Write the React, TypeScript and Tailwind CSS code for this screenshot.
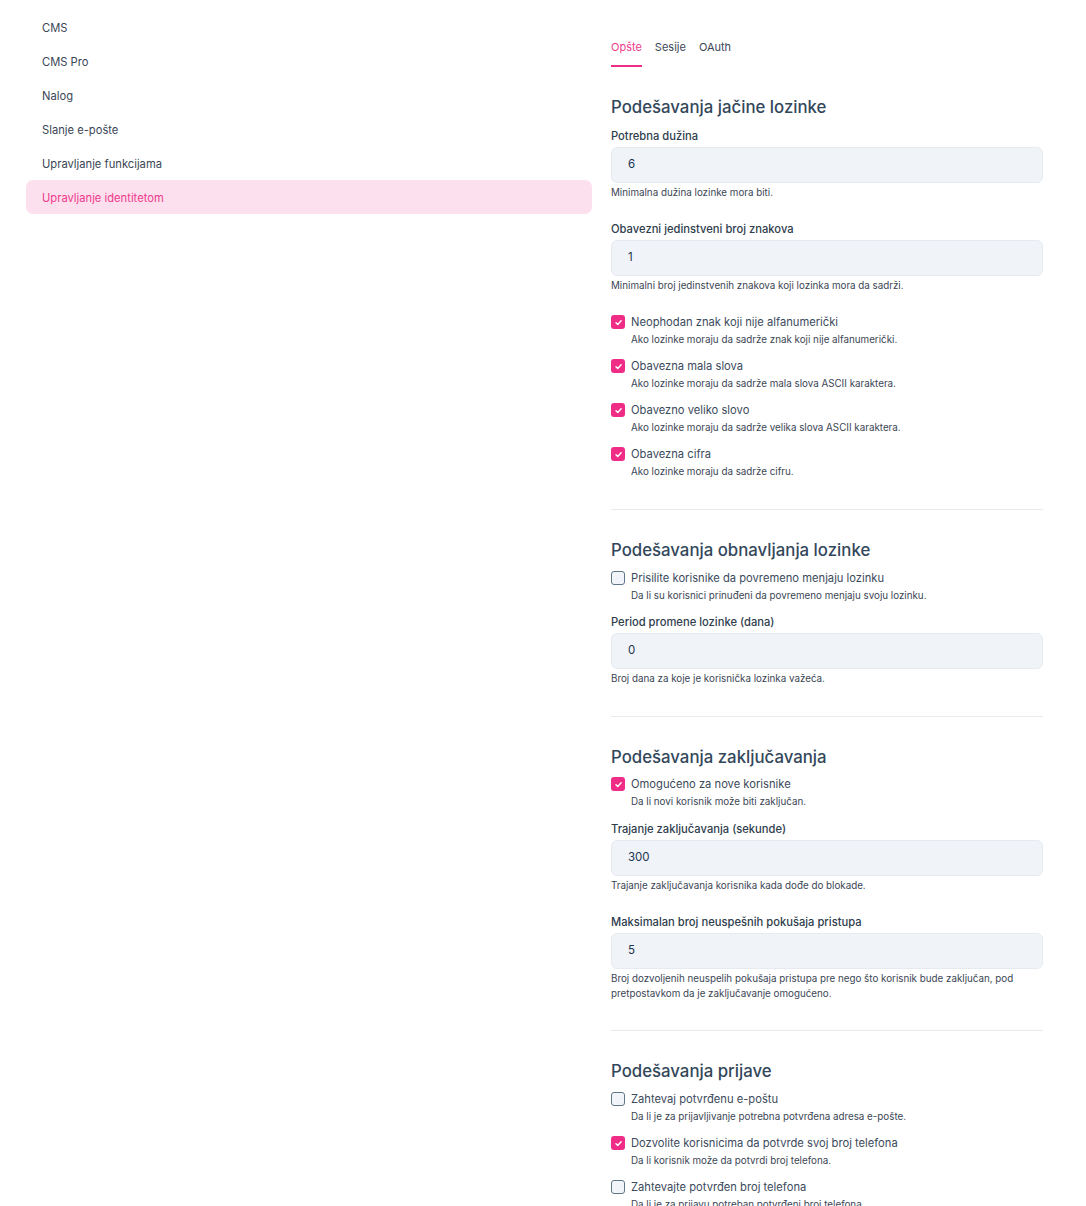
import React from "react";

const navItems = [
  "CMS",
  "CMS Pro",
  "Nalog",
  "Slanje e-pošte",
  "Upravljanje funkcijama",
  "Upravljanje identitetom",
];

function Check({ checked }: { checked: boolean }) {
  if (checked) {
    return (
      <span className="flex h-[14px] w-[14px] shrink-0 items-center justify-center rounded-[3px] bg-[#ef2d87]">
        <svg width="9" height="9" viewBox="0 0 10 10" fill="none">
          <path d="M2.2 5.2 L4.2 7.1 L7.9 3.1" stroke="white" strokeWidth="1.6" strokeLinecap="round" strokeLinejoin="round" />
        </svg>
      </span>
    );
  }
  return <span className="h-[14px] w-[14px] shrink-0 rounded-[3px] border border-[#5f7686] bg-[#f1f5f9]" />;
}

function CheckItem({ checked, label, desc, className = "" }: { checked: boolean; label: string; desc: string; className?: string }) {
  return (
    <div className={className}>
      <div className="flex items-center gap-[6px]">
        <Check checked={checked} />
        <span className="text-[11.2px] leading-[16px] text-[#3b4a5c]">{label}</span>
      </div>
      <div className="mt-[3px] pl-[20px] text-[9.8px] leading-[14px] text-[#3b4654]">{desc}</div>
    </div>
  );
}

function Field({ label, value, help, className = "" }: { label: string; value: string; help: React.ReactNode; className?: string }) {
  return (
    <div className={className}>
      <div className="text-[11.2px] font-medium leading-[16px] text-[#2f3d4d]">{label}</div>
      <div className="mt-[3px] flex h-[36px] items-center rounded-[6px] border border-[#e6ebf1] bg-[#f0f3f7] pl-[16px] text-[11.5px] text-[#1d3550]">
        {value}
      </div>
      <div className="mt-[2px] text-[9.8px] leading-[15px] text-[#3b4654]">{help}</div>
    </div>
  );
}

function Heading({ children }: { children: React.ReactNode }) {
  return <h2 className="text-[16.8px] font-medium leading-[24px] text-[#33475a]">{children}</h2>;
}

export default function App() {
  return (
    <div className="flex bg-white pl-[26px]" style={{ fontFamily: "Inter, 'Noto Sans', sans-serif" }}>
      <nav className="mt-[10px] flex w-[566px] shrink-0 flex-col">
        {navItems.map((item, i) => {
          const active = i === navItems.length - 1;
          return (
            <div
              key={item}
              className={
                active
                  ? "flex h-[34px] items-center rounded-[7px] bg-[#fde0ee] px-[16px] pt-[2px] text-[11.2px] text-[#ee3a8c]"
                  : "flex h-[34px] items-center px-[16px] pt-[2px] text-[11.2px] text-[#3a4656]"
              }
            >
              {item}
            </div>
          );
        })}
      </nav>

      <main className="ml-[19px] w-[432px] shrink-0 pb-[10px]">
        <div className="mt-[39px] flex gap-[13px]">
          <div className="border-b-2 border-[#ef2d87] pb-[10px] text-[11px] leading-[16px] text-[#ee3a8c]">Opšte</div>
          <div className="pb-[10px] text-[11px] leading-[16px] text-[#3a4656]">Sesije</div>
          <div className="pb-[10px] text-[11px] leading-[16px] text-[#3a4656]">OAuth</div>
        </div>

        <section className="mt-[28px] pb-[30px]">
          <Heading>Podešavanja jačine lozinke</Heading>
          <Field className="mt-[9px]" label="Potrebna dužina" value="6" help="Minimalna dužina lozinke mora biti." />
          <Field
            className="mt-[21px]"
            label="Obavezni jedinstveni broj znakova"
            value="1"
            help="Minimalni broj jedinstvenih znakova koji lozinka mora da sadrži."
          />
          <CheckItem
            className="mt-[21px]"
            checked
            label="Neophodan znak koji nije alfanumerički"
            desc="Ako lozinke moraju da sadrže znak koji nije alfanumerički."
          />
          <CheckItem
            className="mt-[11px]"
            checked
            label="Obavezna mala slova"
            desc="Ako lozinke moraju da sadrže mala slova ASCII karaktera."
          />
          <CheckItem
            className="mt-[11px]"
            checked
            label="Obavezno veliko slovo"
            desc="Ako lozinke moraju da sadrže velika slova ASCII karaktera."
          />
          <CheckItem className="mt-[11px]" checked label="Obavezna cifra" desc="Ako lozinke moraju da sadrže cifru." />
        </section>

        <section className="border-t border-[#e8ebef] pt-[28px] pb-[30px]">
          <Heading>Podešavanja obnavljanja lozinke</Heading>
          <CheckItem
            className="mt-[8px]"
            checked={false}
            label="Prisilite korisnike da povremeno menjaju lozinku"
            desc="Da li su korisnici prinuđeni da povremeno menjaju svoju lozinku."
          />
          <Field
            className="mt-[11px]"
            label="Period promene lozinke (dana)"
            value="0"
            help="Broj dana za koje je korisnička lozinka važeća."
          />
        </section>

        <section className="border-t border-[#e8ebef] pt-[28px] pb-[29px]">
          <Heading>Podešavanja zaključavanja</Heading>
          <CheckItem
            className="mt-[7px]"
            checked
            label="Omogućeno za nove korisnike"
            desc="Da li novi korisnik može biti zaključan."
          />
          <Field
            className="mt-[12px]"
            label="Trajanje zaključavanja (sekunde)"
            value="300"
            help="Trajanje zaključavanja korisnika kada dođe do blokade."
          />
          <Field
            className="mt-[21px]"
            label="Maksimalan broj neuspešnih pokušaja pristupa"
            value="5"
            help="Broj dozvoljenih neuspelih pokušaja pristupa pre nego što korisnik bude zaključan, pod pretpostavkom da je zaključavanje omogućeno."
          />
        </section>

        <section className="border-t border-[#e8ebef] pt-[28px] pb-[20px]">
          <Heading>Podešavanja prijave</Heading>
          <CheckItem
            className="mt-[8px]"
            checked={false}
            label="Zahtevaj potvrđenu e-poštu"
            desc="Da li je za prijavljivanje potrebna potvrđena adresa e-pošte."
          />
          <CheckItem
            className="mt-[11px]"
            checked
            label="Dozvolite korisnicima da potvrde svoj broj telefona"
            desc="Da li korisnik može da potvrdi broj telefona."
          />
          <CheckItem
            className="mt-[11px]"
            checked={false}
            label="Zahtevajte potvrđen broj telefona"
            desc="Da li je za prijavu potreban potvrđeni broj telefona."
          />
        </section>
      </main>
    </div>
  );
}
